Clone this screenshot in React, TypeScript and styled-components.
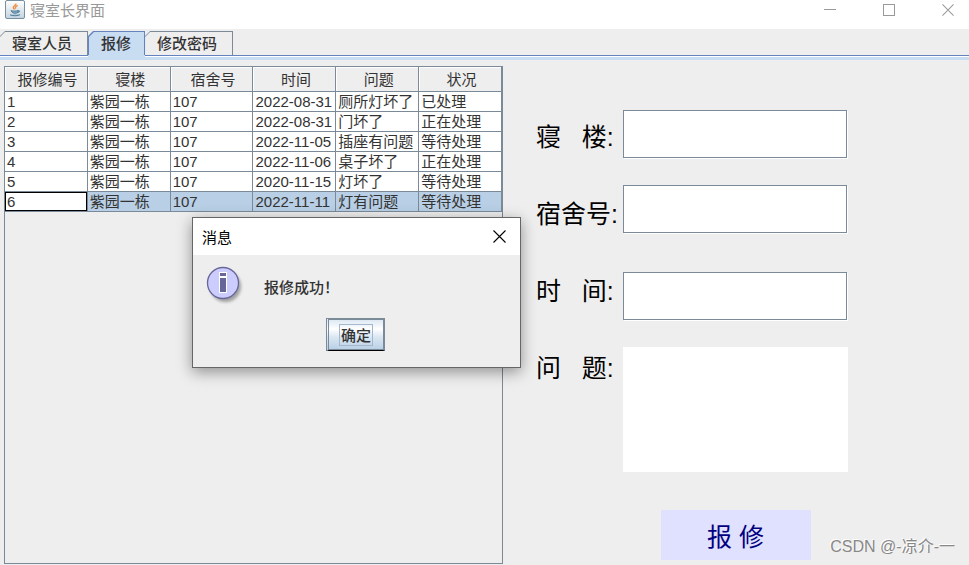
import React from "react";
import styled, { createGlobalStyle } from "styled-components";

const sans = '"Liberation Sans", "Noto Sans CJK SC", sans-serif';
const cjk = '"Noto Sans CJK SC", "Liberation Sans", sans-serif';
const steel = "#7a8a99";

const GlobalStyle = createGlobalStyle`
  * { box-sizing: border-box; }
  body { margin: 0; background: #eee; color: #333; font-family: ${sans}; font-size: 15px; }
  button, input, textarea { font: inherit; color: inherit; padding: 0; margin: 0; border-radius: 0; }
`;

const Window = styled.div`
  position: relative;
  display: flex;
  flex-direction: column;
  min-height: 100vh;
  overflow: hidden;
  background: #eee;
`;

const TitleBar = styled.header`
  display: flex;
  align-items: flex-start;
  height: 29px;
  padding-left: 5px;
  background: #fff;
  color: #999;
`;

const AppTitle = styled.h1`
  flex: 1;
  margin: 0 0 0 5px;
  font: 400 15px/20px ${cjk};
`;

const CaptionButton = styled.button`
  display: flex;
  align-items: center;
  justify-content: flex-start;
  width: 59px;
  height: 20px;
  padding-left: 23px;
  border: 0;
  background: none;
  color: #999;
  &:last-child { width: 50px; }
`;

const TabStrip = styled.div`
  display: flex;
  height: 31px;
  padding-top: 2px;
  background: linear-gradient(#6382bf 0 1px, #fff 1px 2px, #c8ddf2 2px) bottom / 100% 5px no-repeat;
`;

const Tab = styled.button<{ $active?: boolean }>`
  position: relative;
  z-index: 0;
  height: ${(p) => (p.$active ? 29 : 24)}px;
  padding: 0 ${(p) => (p.$active ? "14px 5px 13px" : "16px 0 12px")};
  border: 0;
  background: ${(p) => (p.$active ? "#6382bf" : steel)};
  clip-path: polygon(5px 0, 100% 0, 100% 100%, 0 100%, 0 5px);
  font: 500 15px/24px ${cjk};
  &::before {
    content: "";
    position: absolute;
    z-index: -1;
    inset: 1px 1px 0 ${(p) => (p.$active ? 1 : 0)}px;
    background: ${(p) => (p.$active ? "#c8ddf2" : "#eee")};
    clip-path: polygon(5px 0, 100% 0, 100% 100%, 0 100%, 0 5px);
  }
  &::after {
    content: "";
    position: absolute;
    z-index: -1;
    inset: auto 0 0;
    height: ${(p) => (p.$active ? 5 : 0)}px;
    background: #c8ddf2;
  }
`;

const Content = styled.main`
  flex: 1;
  display: grid;
  grid-template-columns: minmax(0, 499fr) minmax(0, 466fr);
  padding: 6px 0 1px 4px;
`;

const TablePane = styled.section`
  border: 1px solid ${steel};
`;

const Table = styled.table`
  width: 100%;
  table-layout: fixed;
  border-collapse: separate;
  border-spacing: 0;
`;

const HeadCell = styled.th`
  height: 25px;
  padding: 0 0 0 3px;
  border-right: 1px solid ${steel};
  border-bottom: 1px solid ${steel};
  box-shadow: inset 1px 1px #fff;
  font: 400 15px/24px ${cjk};
  text-align: center;
`;

const Row = styled.tr<{ $selected: boolean }>`
  background: ${(p) => (p.$selected ? "#b8cfe5" : "#fff")};
`;

const Cell = styled.td<{ $focused: boolean }>`
  height: 20px;
  padding: 0 0 0 2px;
  border-right: 1px solid ${steel};
  border-bottom: 1px solid ${steel};
  line-height: 19px;
  white-space: nowrap;
  overflow: hidden;
  ${(p) => p.$focused && "background: #fff; box-shadow: inset 0 0 0 1px #000;"}
`;

const Form = styled.form`
  display: flex;
  padding: 0 121px 0 33px;
  color: #000;
`;

const Labels = styled.div`
  display: flex;
  flex-direction: column;
  flex: none;
  width: 87px;
  padding-top: 33px;
`;

const Label = styled.label`
  height: 77px;
  font-size: 25px;
  line-height: 77px;
  white-space: pre;
`;

const Fields = styled.div`
  flex: 1;
  display: flex;
  flex-direction: column;
  min-width: 0;
  padding-top: 44px;
`;

const TextInput = styled.input<{ $wideGap?: boolean }>`
  height: 48px;
  margin: 0 1px ${(p) => (p.$wideGap ? 39 : 27)}px 0;
  padding: 0 4px;
  border: 1px solid ${steel};
  box-shadow: 1px 1px #fff;
  background: #fff;
  outline: 0;
`;

const TextArea = styled.textarea`
  width: 100%;
  height: 125px;
  border: 0;
  background: #fff;
  outline: 0;
  resize: none;
`;

const SubmitButton = styled.button`
  align-self: center;
  width: 150px;
  height: 50px;
  margin-top: 38px;
  border: 0;
  background: #e0e0ff;
  color: #000080;
  font-size: 25px;
`;

const Dialog = styled.div`
  position: absolute;
  left: 192px;
  top: 217px;
  width: 329px;
  border: 1px solid #666;
  background: #eee;
  box-shadow: 0 4px 14px rgba(0, 0, 0, 0.4);
`;

const DialogTitle = styled.header`
  display: flex;
  align-items: center;
  justify-content: space-between;
  height: 37px;
  padding: 0 14px 0 9px;
  background: #fff;
  color: #000;
  font: 400 15px/35px ${cjk};
`;

const CloseButton = styled.button`
  display: flex;
  border: 0;
  background: none;
`;

const DialogBody = styled.div`
  display: flex;
  align-items: flex-start;
  gap: 19px;
  padding: 10px 0 0 12px;
`;

const Message = styled.p`
  margin: 12px 0 0;
  font: 500 15px/20px ${cjk};
`;

const DialogActions = styled.div`
  display: flex;
  justify-content: center;
  padding: 11px 2px 16px 0;
`;

const OkButton = styled.button`
  width: 59px;
  height: 33px;
  border: 2px solid ${steel};
  border-left: 3px double ${steel};
  border-bottom: 1px solid #000;
  background: linear-gradient(#dde8f3, #fff 30%, #dce8f3 55%, #b8cfe5);
  box-shadow: inset 0 -1px ${steel};
`;

const FocusText = styled.span`
  display: inline-block;
  padding: 0 1px;
  border: 1px solid #a3b8cc;
  font: 500 15px/20px ${cjk};
`;

const Watermark = styled.span`
  position: absolute;
  right: 14px;
  bottom: 7px;
  color: #888;
  font-size: 16px;
  line-height: 22px;
  text-shadow: -1px -1px #fff;
`;

const JavaIcon = () => (
  <svg width="20" height="20" viewBox="0 0 20 20" aria-hidden="true">
    <defs>
      <linearGradient id="tile" x1="0" y1="0" x2="0" y2="1">
        <stop offset="0" stopColor="#fff" />
        <stop offset="1" stopColor="#c3d3df" />
      </linearGradient>
    </defs>
    <rect x=".5" y=".5" width="19" height="18" rx="1.5" fill="url(#tile)" stroke="#758fa3" />
    <path d="M10.8 3.5c1 2-3.6 2.6-2.4 4.4.4.9 1 1.2 1.2 1.7M12.6 5.4c-2 1-2.7 2-1.8 3.2" fill="none" stroke="#ed8b3f" strokeWidth="1.4" />
    <path d="M6 10.5c1 .8 5.5.8 7 0v1.6c-1 1.6-5 1.6-6 0zM13 10.7c2.5-.4 2.2 1.6-.6 2M5 14.8c1.5 1.3 8.5 1.3 10-.2" fill="#8ba9bd" stroke="#53819e" strokeWidth="1" />
  </svg>
);

const CrossIcon = ({ size = 13 }: { size?: number }) => (
  <svg width={size} height={size} viewBox="0 0 13 13" stroke="currentColor" strokeWidth="1.1" aria-hidden="true">
    <path d="M.5.5l12 12M12.5.5l-12 12" />
  </svg>
);

const InfoIcon = () => (
  <svg width="40" height="42" viewBox="0 0 40 42" aria-hidden="true">
    <defs>
      <filter id="soft" x="-30%" y="-30%" width="160%" height="160%">
        <feGaussianBlur stdDeviation="1.6" />
      </filter>
    </defs>
    <circle cx="20.5" cy="21.5" r="15.5" fill="#777" opacity=".65" filter="url(#soft)" />
    <circle cx="18" cy="18" r="15.5" fill="#ccf" stroke="#669" strokeWidth="1.3" />
    <path d="M14 7h8v21h-8z" fill="#fff" />
    <path d="M15 8h6v3h-6zM15 13h6v14h-6z" fill="#669" />
  </svg>
);

const columns = ["报修编号", "寝楼", "宿舍号", "时间", "问题", "状况"];

const repairs = [
  ["1", "紫园一栋", "107", "2022-08-31", "厕所灯坏了", "已处理"],
  ["2", "紫园一栋", "107", "2022-08-31", "门坏了", "正在处理"],
  ["3", "紫园一栋", "107", "2022-11-05", "插座有问题", "等待处理"],
  ["4", "紫园一栋", "107", "2022-11-06", "桌子坏了", "正在处理"],
  ["5", "紫园一栋", "107", "2020-11-15", "灯坏了", "等待处理"],
  ["6", "紫园一栋", "107", "2022-11-11", "灯有问题", "等待处理"],
];

export default function App() {
  return (
    <>
      <GlobalStyle />
      <Window>
        <TitleBar>
          <JavaIcon />
          <AppTitle>寝室长界面</AppTitle>
          <CaptionButton aria-label="最小化">
            <svg width="12" height="12" aria-hidden="true"><path d="M0 5.5h12" stroke="currentColor" /></svg>
          </CaptionButton>
          <CaptionButton aria-label="最大化">
            <svg width="12" height="12" aria-hidden="true"><rect x=".5" y=".5" width="11" height="11" fill="none" stroke="currentColor" /></svg>
          </CaptionButton>
          <CaptionButton aria-label="关闭"><CrossIcon size={12} /></CaptionButton>
        </TitleBar>

        <TabStrip role="tablist">
          <Tab role="tab" aria-selected={false}>寝室人员</Tab>
          <Tab role="tab" aria-selected $active>报修</Tab>
          <Tab role="tab" aria-selected={false}>修改密码</Tab>
        </TabStrip>

        <Content>
          <TablePane>
            <Table>
              <thead>
                <tr>{columns.map((c) => <HeadCell key={c} scope="col">{c}</HeadCell>)}</tr>
              </thead>
              <tbody>
                {repairs.map((row) => {
                  const selected = row[0] === "6";
                  return (
                    <Row key={row[0]} $selected={selected}>
                      {row.map((value, i) => (
                        <Cell key={columns[i]} $focused={selected && i === 0}>{value}</Cell>
                      ))}
                    </Row>
                  );
                })}
              </tbody>
            </Table>
          </TablePane>

          <Form onSubmit={(e) => e.preventDefault()}>
            <Labels>
              <Label htmlFor="building">{"寝   楼:"}</Label>
              <Label htmlFor="room">宿舍号:</Label>
              <Label htmlFor="date">{"时   间:"}</Label>
              <Label htmlFor="problem">{"问   题:"}</Label>
            </Labels>
            <Fields>
              <TextInput id="building" />
              <TextInput id="room" $wideGap />
              <TextInput id="date" />
              <TextArea id="problem" />
              <SubmitButton type="submit">报 修</SubmitButton>
            </Fields>
          </Form>
        </Content>

        <Dialog role="dialog" aria-labelledby="dialog-title">
          <DialogTitle>
            <span id="dialog-title">消息</span>
            <CloseButton aria-label="关闭"><CrossIcon /></CloseButton>
          </DialogTitle>
          <DialogBody>
            <InfoIcon />
            <Message>报修成功！</Message>
          </DialogBody>
          <DialogActions>
            <OkButton><FocusText>确定</FocusText></OkButton>
          </DialogActions>
        </Dialog>

        <Watermark>CSDN @-凉介-一</Watermark>
      </Window>
    </>
  );
}
